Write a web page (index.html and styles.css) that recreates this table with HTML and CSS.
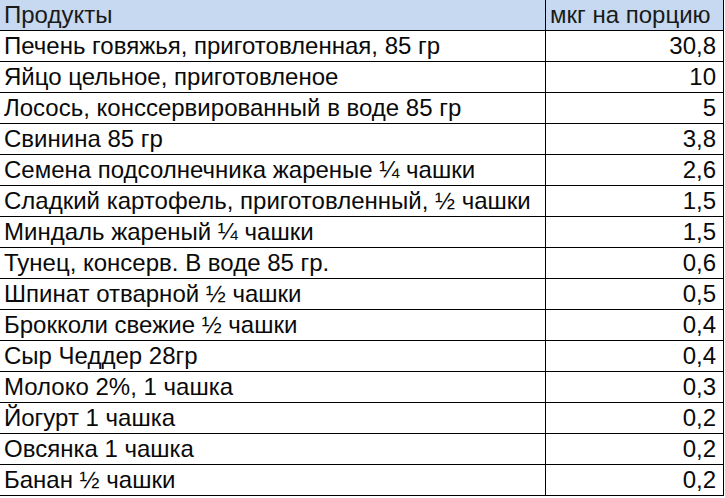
FILE: index.html
```html
<!DOCTYPE html>
<html lang="ru">
<head>
<meta charset="utf-8">
<link rel="stylesheet" href="styles.css">
</head>
<body>
<table class="grid">
  <thead>
    <tr class="head">
      <th class="name">Продукты</th>
      <th class="val">мкг на порцию</th>
    </tr>
  </thead>
  <tbody>
    <tr><td class="name">Печень говяжья, приготовленная, 85 гр</td><td class="num">30,8</td></tr>
    <tr><td class="name">Яйцо цельное, приготовленое</td><td class="num">10</td></tr>
    <tr><td class="name">Лосось, конссервированный в воде 85 гр</td><td class="num">5</td></tr>
    <tr><td class="name">Свинина 85 гр</td><td class="num">3,8</td></tr>
    <tr><td class="name">Семена подсолнечника жареные ¼ чашки</td><td class="num">2,6</td></tr>
    <tr><td class="name">Сладкий картофель, приготовленный, ½ чашки</td><td class="num">1,5</td></tr>
    <tr><td class="name">Миндаль жареный ¼ чашки</td><td class="num">1,5</td></tr>
    <tr><td class="name">Тунец, консерв. В воде 85 гр.</td><td class="num">0,6</td></tr>
    <tr><td class="name">Шпинат отварной ½ чашки</td><td class="num">0,5</td></tr>
    <tr><td class="name">Брокколи свежие ½ чашки</td><td class="num">0,4</td></tr>
    <tr><td class="name">Сыр Чеддер 28гр</td><td class="num">0,4</td></tr>
    <tr><td class="name">Молоко 2%, 1 чашка</td><td class="num">0,3</td></tr>
    <tr><td class="name">Йогурт 1 чашка</td><td class="num">0,2</td></tr>
    <tr><td class="name">Овсянка 1 чашка</td><td class="num">0,2</td></tr>
    <tr><td class="name">Банан ½ чашки</td><td class="num">0,2</td></tr>
  </tbody>
</table>
</body>
</html>
```
FILE: styles.css
```css
html, body {
  margin: 0;
  padding: 0;
  background: #ffffff;
}
body {
  font-family: "Liberation Sans", Arial, sans-serif;
  font-size: 24px;
  color: #0a0a0a;
}
.grid {
  border-collapse: collapse;
  table-layout: fixed;
  width: 724px;
}
.grid th, .grid td {
  height: 30px;
  padding: 0 4px;
  border-bottom: 1px solid #000000;
  font-weight: normal;
  line-height: 30px;
  white-space: nowrap;
  overflow: hidden;
}
.head th {
  background: #c6d9f0;
  color: #1a1a1a;
}
.grid .name {
  width: 537px;
  text-align: left;
  border-left: none;
}
.grid .val {
  text-align: left;
  border-left: 1px solid #000000;
  border-right: 1px solid #000000;
}
.grid .num {
  text-align: right;
  padding-right: 7px;
  border-left: 1px solid #000000;
  border-right: 1px solid #000000;
}
```
